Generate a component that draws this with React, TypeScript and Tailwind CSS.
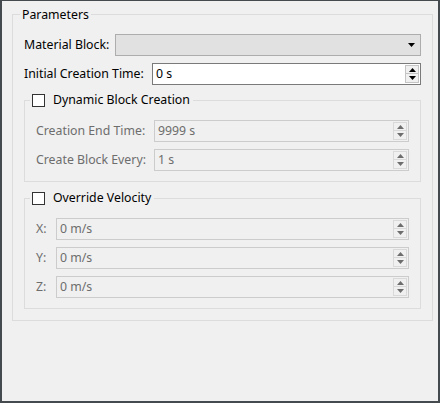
import type { ReactNode } from "react";

const FONT = "font-['Noto_Sans','Liberation_Sans',sans-serif] text-[12.3px] leading-[16px]";

function Arrow({ up, color }: { up?: boolean; color: string }) {
  return (
    <svg width="7" height="4" viewBox="0 0 7 4" className="block">
      {up ? <path d="M3.5 0 L7 4 L0 4 Z" fill={color} /> : <path d="M0 0 L7 0 L3.5 4 Z" fill={color} />}
    </svg>
  );
}

function SpinField({ value, width, disabled }: { value: string; width: string; disabled?: boolean }) {
  const arrow = disabled ? "#6d6d6d" : "#000000";
  return (
    <div
      className={`flex h-[22px] ${width} border ${
        disabled ? "border-[#cccccc] bg-[#f0f0f0] text-[#6d6d6d]" : "border-[#7a7a7a] bg-white text-black"
      }`}
    >
      <div className="flex flex-1 items-center pl-[3px]">{value}</div>
      <div className="flex w-[15px] flex-col py-[1px] pr-[1px]">
        <div className={`flex h-[9px] items-center justify-center border ${disabled ? "border-[#d9d9d9]" : "border-[#c4c4c4]"} bg-[#f0f0f0]`}>
          <Arrow up color={arrow} />
        </div>
        <div className={`flex h-[9px] items-center justify-center border border-t-0 ${disabled ? "border-[#d9d9d9]" : "border-[#c4c4c4]"} bg-[#f0f0f0]`}>
          <Arrow color={arrow} />
        </div>
      </div>
    </div>
  );
}

function CheckGroup({ title, children, className = "" }: { title: string; children: ReactNode; className?: string }) {
  return (
    <div className={`relative border border-[#dcdcdc] px-[11px] pt-[19px] pb-[10px] ${className}`}>
      <div className="absolute left-[5px] top-[-9px] flex items-center gap-[8px] bg-[#f0f0f0] pl-[2px] pr-[3px]">
        <span className="block h-[13px] w-[13px] border border-[#333333] bg-white" />
        <span className="text-black">{title}</span>
      </div>
      <div className="flex flex-col gap-[7px]">{children}</div>
    </div>
  );
}

function Row({ label, children }: { label: string; children: ReactNode }) {
  return (
    <div className="flex items-center justify-between">
      <span className="text-[#6d6d6d]">{label}</span>
      {children}
    </div>
  );
}

export default function App() {
  return (
    <div className={`h-[403px] w-[440px] border-x-2 border-t border-b-2 border-[#454a4f] bg-[#f0f0f0] ${FONT}`}>
      <div className="relative ml-[10px] mt-[13px] w-[421px] border border-[#dcdcdc] px-[11px] pt-[19px] pb-[11px]">
        <span className="absolute left-[7px] top-[-8px] bg-[#f0f0f0] px-[2px] text-black">Parameters</span>

        <div className="flex items-center justify-between">
          <span className="text-black">Material Block:</span>
          <div className="flex h-[22px] w-[306px] items-center justify-end border border-[#adadad] bg-[#e1e1e1] pr-[5px]">
            <Arrow color="#000000" />
          </div>
        </div>

        <div className="mt-[7px] flex items-center justify-between">
          <span className="text-black">Initial Creation Time:</span>
          <SpinField value="0 s" width="w-[269px]" />
        </div>

        <CheckGroup title="Dynamic Block Creation" className="mt-[15px]">
          <Row label="Creation End Time:">
            <SpinField value="9999 s" width="w-[255px]" disabled />
          </Row>
          <Row label="Create Block Every:">
            <SpinField value="1 s" width="w-[255px]" disabled />
          </Row>
        </CheckGroup>

        <CheckGroup title="Override Velocity" className="mt-[16px]">
          {["X:", "Y:", "Z:"].map((axis) => (
            <Row key={axis} label={axis}>
              <SpinField value="0 m/s" width="w-[353px]" disabled />
            </Row>
          ))}
        </CheckGroup>
      </div>
    </div>
  );
}
